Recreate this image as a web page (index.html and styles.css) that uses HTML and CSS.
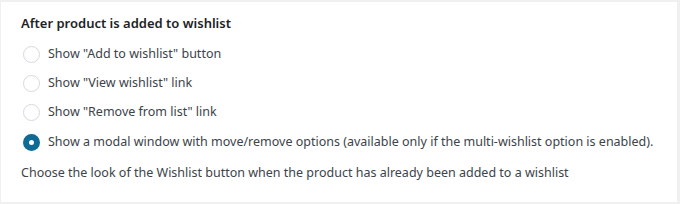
FILE: index.html
```html
<!DOCTYPE html>
<html lang="en">
<head>
  <meta charset="UTF-8" />
  <meta name="viewport" content="width=device-width, initial-scale=1.0" />
  <title>Wishlist settings</title>
  <link rel="stylesheet" href="styles.css">
</head>
<body>
  <div class="panel">
    <h4 class="title">After product is added to wishlist</h4>

    <div class="options">
      <label class="option">
        <input type="radio" name="after_add" value="add">
        <span>Show "Add to wishlist" button</span>
      </label>
      <label class="option">
        <input type="radio" name="after_add" value="view">
        <span>Show "View wishlist" link</span>
      </label>
      <label class="option">
        <input type="radio" name="after_add" value="remove">
        <span>Show "Remove from list" link</span>
      </label>
      <label class="option">
        <input type="radio" name="after_add" value="modal" checked>
        <span>Show a modal window with move/remove options (available only if the multi-wishlist option is enabled).</span>
      </label>
    </div>

    <p class="desc">Choose the look of the Wishlist button when the product has already been added to a wishlist</p>
  </div>
</body>
</html>
```

FILE: styles.css
```css
html, body {
  height: 100%;
}
body {
  margin: 0;
  background: #f0f0f0;
  font-family: 'Segoe UI', 'Noto Sans', sans-serif;
  font-size: 12.5px;
  color: #3c434a;
  box-sizing: border-box;
  padding: 2px 3px 2px 1px;
}
.panel {
  background: #fff;
  height: 100%;
  box-sizing: border-box;
  padding: 11px 20px 0 20px;
}
.title {
  margin: 0 0 11px;
  font-size: 13px;
  font-weight: 600;
  color: #1d2327;
  line-height: 20px;
}
.options {
  display: flex;
  flex-direction: column;
  gap: 9px;
}
.option {
  display: flex;
  align-items: center;
  gap: 8px;
  line-height: 20px;
  white-space: nowrap;
  cursor: pointer;
}
.option:last-child {
  margin-top: 1px;
}
.option input {
  appearance: none;
  -webkit-appearance: none;
  margin: 0 0 0 2px;
  width: 17px;
  height: 17px;
  border: 1px solid #d5d9de;
  border-radius: 50%;
  background: #fff;
  box-sizing: border-box;
  flex: none;
}
.option input:checked {
  border: 6px solid #0f6a94;
  background: #fff;
}
.desc {
  margin: 11px 0 0;
  line-height: 20px;
}
```
